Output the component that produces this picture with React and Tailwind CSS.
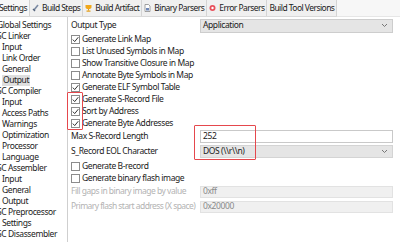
import React from 'react'

const tabs = [
  { label: 'Settings', icon: null, active: true },
  { label: 'Build Steps', icon: 'wrench' },
  { label: 'Build Artifact', icon: 'cup' },
  { label: 'Binary Parsers', icon: 'doc' },
  { label: 'Error Parsers', icon: 'err' },
  { label: 'Build Tool Versions', icon: null },
]

const tree = [
  { label: 'Global Settings', top: true },
  { label: 'SC Linker', top: true },
  { label: 'Input' },
  { label: 'Link Order' },
  { label: 'General' },
  { label: 'Output', selected: true },
  { label: 'SC Compiler', top: true },
  { label: 'Input' },
  { label: 'Access Paths' },
  { label: 'Warnings' },
  { label: 'Optimization' },
  { label: 'Processor' },
  { label: 'Language' },
  { label: 'SC Assembler', top: true },
  { label: 'Input' },
  { label: 'General' },
  { label: 'Output' },
  { label: 'SC Preprocessor', top: true },
  { label: 'Settings' },
  { label: 'SC Disassembler', top: true },
]

const checks = [
  { label: 'Generate Link Map', on: true },
  { label: 'List Unused Symbols in Map', on: false },
  { label: 'Show Transitive Closure in Map', on: false },
  { label: 'Annotate Byte Symbols in Map', on: false },
  { label: 'Generate ELF Symbol Table', on: true },
  { label: 'Generate S-Record File', on: true },
  { label: 'Sort by Address', on: true },
  { label: 'Generate Byte Addresses', on: true },
]

const TabIcon = ({ kind }) => {
  if (kind === 'wrench')
    return (
      <svg width="7" height="8" viewBox="0 0 7 8">
        <path d="M6 1 L2 6" stroke="#7b8aa3" strokeWidth="1.6" />
        <path d="M1 5 L3 7" stroke="#56657c" strokeWidth="1.4" />
      </svg>
    )
  if (kind === 'cup')
    return (
      <svg width="7" height="8" viewBox="0 0 7 8">
        <path d="M0.5 1 H6.5 V3 Q6.5 5 3.5 5 Q0.5 5 0.5 3 Z" fill="#f0a81c" />
        <rect x="3" y="5" width="1" height="1.5" fill="#e39a10" />
        <rect x="1.5" y="6.5" width="4" height="1.2" fill="#e39a10" />
      </svg>
    )
  if (kind === 'doc')
    return (
      <svg width="7" height="8" viewBox="0 0 7 8">
        <path d="M1 0.5 H4.5 L6 2 V7.5 H1 Z" fill="#fff" stroke="#8a8a8a" strokeWidth="0.8" />
        <rect x="2" y="4" width="3" height="2.5" fill="#6f88b8" />
      </svg>
    )
  if (kind === 'err')
    return (
      <svg width="7" height="8" viewBox="0 0 7 8">
        <circle cx="3.5" cy="4" r="3" fill="#e8505b" />
        <circle cx="3.5" cy="4" r="1.2" fill="#fff" />
      </svg>
    )
  return null
}

const Check = ({ on }) => (
  <span className="w-[9px] h-[9px] border border-[#8c8c8c] bg-white flex items-center justify-center shrink-0">
    {on && (
      <svg width="7" height="7" viewBox="0 0 7 7">
        <path d="M0.8 3.6 L2.7 5.6 L6.3 1.2" fill="none" stroke="#333" strokeWidth="1" />
      </svg>
    )}
  </span>
)

const Chevron = () => (
  <svg width="7" height="5" viewBox="0 0 7 5">
    <path d="M1 1 L3.5 3.5 L6 1" fill="none" stroke="#777" strokeWidth="1" />
  </svg>
)

export default function App() {
  return (
    <div
      className="relative w-[400px] h-[242px] overflow-hidden bg-white text-[8.5px] tracking-[-0.4px] text-[#1b1b1b]"
      style={{ fontFamily: '"Noto Sans", "Open Sans", sans-serif' }}
    >
      {/* tab strip */}
      <div className="flex h-[17px] bg-[#f7f7f7]">
        <div className="flex h-full -ml-[3px] bg-[#f0f0f0] border-b border-[#d9d9d9] tracking-[-0.55px]">
          {tabs.map((t, i) => (
            <div
              key={i}
              className={`flex items-center gap-[3px] h-full px-[2px] border-r border-[#d4d4d4] leading-none whitespace-nowrap ${
                t.active ? 'bg-[#f7f7f7]' : ''
              }`}
            >
              {t.icon && <TabIcon kind={t.icon} />}
              <span>{t.label}</span>
            </div>
          ))}
        </div>
        <div className="flex-1 border-b border-[#e6e6e6]" />
      </div>

      <div className="flex h-[225px]">
        {/* tree */}
        <div className="w-[68px] shrink-0 border-r border-[#cfcfcf] overflow-hidden pt-[2.5px]">
          {tree.map((n, i) => (
            <div key={i} className="h-[11px] flex items-center leading-none whitespace-nowrap">
              <span
                className={`${n.top ? '-ml-[3px]' : 'ml-[2px]'} ${
                  n.selected ? 'bg-[#dedede] px-[1px]' : ''
                } h-[11px] flex items-center`}
              >
                {n.label}
              </span>
            </div>
          ))}
        </div>

        {/* settings panel */}
        <div className="flex-1 pl-[3px] pr-[7px] pt-[1px]">
          <div className="flex items-center h-[15px]">
            <span className="w-[129px]">Output Type</span>
            <div className="flex-1 h-[14px] bg-[#e5e5e5] border border-[#cdcdcd] flex items-center justify-between pl-[2px] pr-[4px]">
              <span>Application</span>
              <Chevron />
            </div>
          </div>

          {checks.map((c, i) => (
            <div key={i} className="h-[12px] flex items-center gap-[2px]">
              <Check on={c.on} />
              <span className="leading-none whitespace-nowrap">{c.label}</span>
            </div>
          ))}

          <div className="flex items-center h-[14px]">
            <span className="w-[129px]">Max S-Record Length</span>
            <div className="flex-1 h-[13px] bg-white border border-[#c9c9c9] flex items-center pl-[2px]">252</div>
          </div>

          <div className="flex items-center h-[14px] mt-[1px]">
            <span className="w-[129px]">S_Record EOL Character</span>
            <div className="flex-1 h-[13px] bg-[#e5e5e5] border border-[#d4d4d4] flex items-center justify-between pl-[2px] pr-[4px]">
              <span>DOS (\\r\\n)</span>
              <Chevron />
            </div>
          </div>

          <div className="h-[12px] mt-[2px] flex items-center gap-[2px]">
            <Check on={false} />
            <span className="leading-none">Generate B-record</span>
          </div>
          <div className="h-[12px] flex items-center gap-[2px]">
            <Check on={false} />
            <span className="leading-none">Generate binary flash image</span>
          </div>

          <div className="flex items-center h-[13px] mt-[1px] text-[#b3b3b3]">
            <span className="w-[129px] whitespace-nowrap tracking-[-0.5px]">Fill gaps in binary image by value</span>
            <div className="flex-1 h-[12px] bg-[#f0f0f0] border border-[#e2e2e2] flex items-center pl-[2px] text-[#8a8a8a]">0xff</div>
          </div>
          <div className="flex items-center h-[13px] mt-[2px] text-[#b3b3b3]">
            <span className="w-[129px] whitespace-nowrap tracking-[-0.55px]">Primary flash start address (X space)</span>
            <div className="flex-1 h-[12px] bg-[#f0f0f0] border border-[#e2e2e2] flex items-center pl-[2px] text-[#8a8a8a]">0x20000</div>
          </div>
        </div>
      </div>

      {/* annotation boxes */}
      <div className="absolute left-[67px] top-[92px] w-[16px] h-[38px] border border-[#e5484d] rounded-[1px]" />
      <div className="absolute left-[194px] top-[125px] w-[62px] h-[35px] border border-[#e5484d] rounded-[1px]" />
    </div>
  )
}
